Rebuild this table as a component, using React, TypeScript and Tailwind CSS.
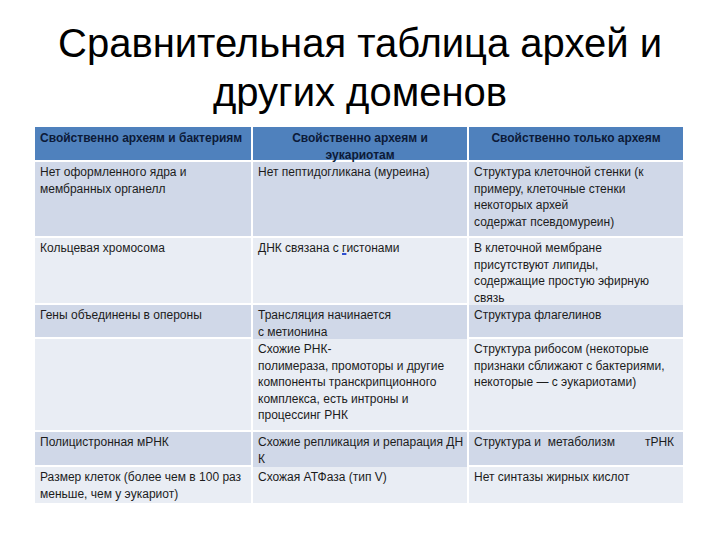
import React from "react";

type Row = {
  h: string;
  bg: string;
  cells: string[][];
};

const rows: Row[] = [
  {
    h: "h-[74px]",
    bg: "bg-[#d0d8e8]",
    cells: [
      ["Нет оформленного ядра и", "мембранных органелл"],
      ["Нет пептидогликана (муреина)"],
      ["Структура клеточной стенки (к", "примеру, клеточные стенки", "некоторых архей", "содержат псевдомуреин)"],
    ],
  },
  {
    h: "h-[65px]",
    bg: "bg-[#e9edf4]",
    cells: [
      ["Кольцевая хромосома"],
      ["ДНК связана с гистонами"],
      ["В клеточной мембране", "присутствуют липиды,", "содержащие простую эфирную", "связь"],
    ],
  },
  {
    h: "h-[32px]",
    bg: "bg-[#d0d8e8]",
    cells: [["Гены объединены в опероны"], ["Трансляция начинается", "с метионина"], ["Структура флагелинов"]],
  },
  {
    h: "h-[91px]",
    bg: "bg-[#e9edf4]",
    cells: [
      [],
      ["Схожие РНК-", "полимераза, промоторы и другие", "компоненты транскрипционного", "комплекса, есть интроны и", "процессинг РНК"],
      ["Структура рибосом (некоторые", "признаки сближают с бактериями,", "некоторые — с эукариотами)"],
    ],
  },
  {
    h: "h-[33px]",
    bg: "bg-[#d0d8e8]",
    cells: [["Полицистронная мРНК"], ["Схожие репликация и репарация ДН", "К"], ["Структура и  метаболизм         тРНК"]],
  },
  {
    h: "h-[36px]",
    bg: "bg-[#e9edf4]",
    cells: [["Размер клеток (более чем в 100 раз", "меньше, чем у эукариот)"], ["Схожая АТФаза (тип V)"], ["Нет синтазы жирных кислот"]],
  },
];

function Cell({ lines, bg }: { lines: string[]; bg: string }) {
  return (
    <div className={`${bg} px-[5px] pt-[2px]`}>
      {lines.map((l, i) => (
        <div key={i} className="whitespace-pre leading-[16.6px]">
          {l === "ДНК связана с гистонами" ? (
            <>
              ДНК связана с <span className="underline decoration-[#2f4fd0] decoration-2">г</span>истонами
            </>
          ) : (
            l
          )}
        </div>
      ))}
    </div>
  );
}

export default function App() {
  return (
    <div className="w-[720px] h-[540px] bg-white overflow-hidden font-['Liberation_Sans',Arial,sans-serif]">
      <h1 className="pt-[19px] text-center text-[40px] leading-[49px] text-black font-normal">
        Сравнительная таблица архей и
        <br />
        других доменов
      </h1>

      <div className="ml-[35px] mt-[10px] w-[648px] grid grid-cols-[216px_214px_214px] gap-[2px] bg-white text-[12px] text-[#1c1c1c]">
        <div className="h-[33px] bg-[#4f81bd] px-[5px] pt-[3px] font-bold text-[#0c1a38] leading-[16.6px]">
          Свойственно археям и бактериям
        </div>
        <div className="h-[33px] bg-[#4f81bd] px-[5px] pt-[3px] font-bold text-[#0c1a38] leading-[16.6px] text-center">
          Свойственно археям и
          <br />
          эукариотам
        </div>
        <div className="h-[33px] bg-[#4f81bd] px-[5px] pt-[3px] font-bold text-[#0c1a38] leading-[16.6px] text-center">
          Свойственно только археям
        </div>

        {rows.map((r, i) => (
          <React.Fragment key={i}>
            {r.cells.map((c, j) => (
              <div key={j} className={`${r.h} flex flex-col`}>
                <Cell lines={c} bg={`${r.bg} flex-1`} />
              </div>
            ))}
          </React.Fragment>
        ))}
      </div>
    </div>
  );
}
